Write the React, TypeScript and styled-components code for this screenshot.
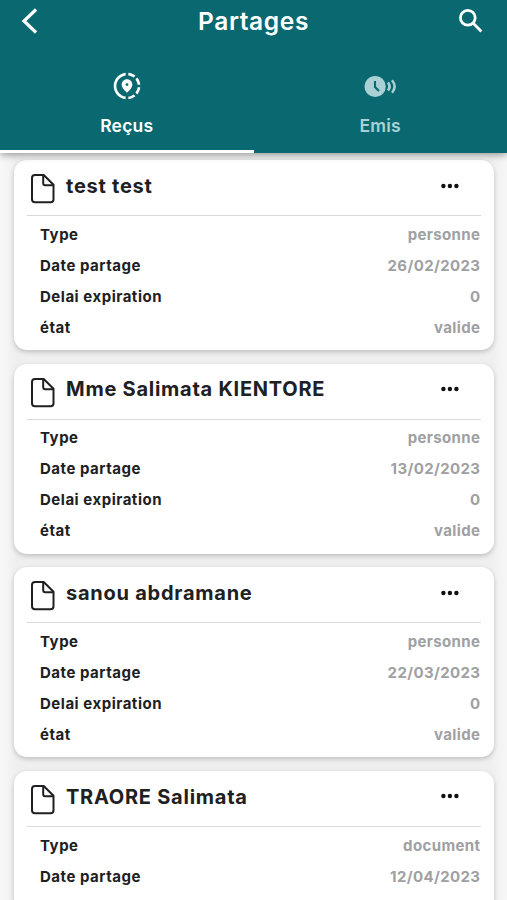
import React from "react";
import styled, { createGlobalStyle } from "styled-components";

const GlobalStyle = createGlobalStyle`
  *, *::before, *::after { box-sizing: border-box; }
  body { margin: 0; overflow: hidden; background: #f2f2f3; }
  h1, h2, dl, dt, dd { margin: 0; }
  button { border: 0; padding: 0; background: none; color: inherit; font: inherit; letter-spacing: inherit; }
`;

const Screen = styled.main`
  height: 900px;
  overflow: hidden;
  background: linear-gradient(90deg, #f8f8f8 0, #efeff0 16px, #efeff0 491px, #f7f7f8 100%);
  color: #202022;
  font-family: Inter, "Liberation Sans", sans-serif;
`;

const Header = styled.header`
  position: relative;
  height: 153px;
  background: #0a6970;
  color: #fff;
  box-shadow: 0 2px 7px rgba(0, 0, 0, 0.36);
`;

const AppBar = styled.div`
  height: 42px;
  display: grid;
  grid-template-columns: 60px 1fr 60px;
  align-items: center;
`;

const BarButton = styled.button<{ $end?: boolean }>`
  height: 42px;
  display: flex;
  align-items: center;
  justify-content: ${(p) => (p.$end ? "flex-end" : "flex-start")};
  padding: ${(p) => (p.$end ? "0 23px 0 0" : "0 0 0 18px")};
`;

const PageTitle = styled.h1`
  text-align: center;
  font-size: 24.5px;
  line-height: 42px;
  font-weight: 600;
  letter-spacing: 0.65px;
`;

const Tabs = styled.nav`
  height: 111px;
  display: grid;
  grid-template-columns: 1fr 1fr;
`;

const Tab = styled.button<{ $active?: boolean }>`
  display: flex;
  flex-direction: column;
  align-items: center;
  padding-top: 28px;
  border-bottom: 3px solid ${(p) => (p.$active ? "#fff" : "transparent")};
  color: ${(p) => (p.$active ? "#fff" : "#a9d1d5")};
  font-size: 17.5px;
  line-height: 24px;
  font-weight: 600;
  letter-spacing: 0.2px;
`;

const TabIcon = styled.span`
  height: 32px;
  margin-bottom: 12px;
  display: flex;
`;

const List = styled.section`
  display: flex;
  flex-direction: column;
  gap: 13.6px;
  padding: 7px 13px 0 14px;
`;

const Card = styled.article`
  height: 190px;
  flex: none;
  padding: 0 13px;
  border-radius: 13px;
  background: #fff;
  box-shadow: 0 2px 5px rgba(0, 0, 0, 0.2);
`;

const CardHead = styled.div`
  height: 56px;
  display: flex;
  align-items: flex-start;
  border-bottom: 1px solid #d9d9d9;
`;

const FileSlot = styled.span`
  width: 39px;
  padding: 13px 0 0 3px;
  display: flex;
`;

const CardTitle = styled.h2`
  flex: 1;
  padding-top: 11.9px;
  font-size: 20px;
  line-height: 28px;
  font-weight: 700;
  letter-spacing: 0.75px;
  white-space: nowrap;
`;

const MoreButton = styled.button`
  width: 62px;
  height: 51px;
  display: flex;
  align-items: center;
  justify-content: center;
`;

const Details = styled.dl`
  padding: 3.4px 1px 0 13px;
`;

const Row = styled.div`
  height: 31px;
  display: flex;
  align-items: center;
  justify-content: space-between;
  font-size: 15px;
  line-height: 18px;
  font-weight: 700;
  letter-spacing: 0.52px;
`;

const Value = styled.dd`
  color: #a0a0a2;
  letter-spacing: 0.38px;
  margin-right: -0.4px;
`;

const BackIcon = () => (
  <svg width="24" height="30" viewBox="0 0 24 30" fill="none" stroke="currentColor" strokeWidth="3.2">
    <path d="M18 3.5 6 15l12 11.5" />
  </svg>
);

const SearchIcon = () => (
  <svg width="26" height="26" viewBox="0 0 26 26" fill="none" stroke="currentColor" strokeWidth="2.8">
    <circle cx="9.8" cy="9.8" r="7.4" />
    <path d="m15 15 8.4 8.4" />
  </svg>
);

const ShareLocationIcon = () => (
  <svg width="32" height="32" viewBox="0 0 24 24" fill="currentColor">
    <path d="M13.02 19.93v2.02c2.01-.2 3.84-1 5.32-2.21l-1.42-1.43c-1.11.86-2.44 1.44-3.9 1.62zM4.03 12c0-4.05 3.03-7.41 6.95-7.93V2.05C5.95 2.58 2.03 6.84 2.03 12s3.92 9.42 8.95 9.95v-2.02c-3.92-.52-6.95-3.88-6.95-7.93zM19.95 11h2.02c-.2-2.01-1-3.84-2.21-5.32l-1.43 1.43c.86 1.1 1.44 2.43 1.62 3.89zM18.34 4.26c-1.48-1.21-3.32-2.01-5.32-2.21v2.02c1.46.18 2.79.76 3.9 1.62l1.42-1.43zM18.33 16.9l1.43 1.42c1.21-1.48 2.01-3.31 2.21-5.32h-2.02c-.18 1.46-.76 2.79-1.62 3.9z" />
    <path d="M16 11.1C16 8.61 14.1 7 12 7s-4 1.61-4 4.1c0 1.66 1.33 3.63 4 5.9 2.67-2.27 4-4.24 4-5.9zM12 12a1.07 1.07 0 1 1 0-2.14A1.07 1.07 0 0 1 12 12z" />
  </svg>
);

const ClockSignalIcon = () => (
  <svg width="34" height="32" viewBox="0 0 34 32" fill="none" stroke="currentColor">
    <circle cx="12.2" cy="16.5" r="10.6" fill="currentColor" stroke="none" />
    <path d="M12 11v6l4 4" stroke="#0a6970" strokeWidth="2.1" />
    <path d="M25 12.5q3 4 0 8" strokeWidth="2.7" />
    <path d="M29 10.2q5.3 6.3 0 12.6" strokeWidth="2.5" />
  </svg>
);

const FileIcon = () => (
  <svg width="26" height="32" viewBox="0 0 26 32" fill="none" stroke="currentColor" strokeWidth="2" strokeLinejoin="round">
    <path d="M5 2h8.7L23.5 11.7V26.3a3 3 0 0 1-3 3H5a3 3 0 0 1-3-3V5a3 3 0 0 1 3-3Z" />
    <path d="M13.2 2v8.2a2 2 0 0 0 2 2h8.3" />
  </svg>
);

const MoreIcon = () => (
  <svg width="20" height="6" viewBox="0 0 20 6" fill="#111">
    <circle cx="3.4" cy="3" r="2.2" />
    <circle cx="9.9" cy="3" r="2.2" />
    <circle cx="16.4" cy="3" r="2.2" />
  </svg>
);

type Share = { name: string; type: string; date: string; delay?: string; state?: string };

const shares: Share[] = [
  { name: "test test", type: "personne", date: "26/02/2023", delay: "0", state: "valide" },
  { name: "Mme Salimata KIENTORE", type: "personne", date: "13/02/2023", delay: "0", state: "valide" },
  { name: "sanou abdramane", type: "personne", date: "22/03/2023", delay: "0", state: "valide" },
  { name: "TRAORE Salimata", type: "document", date: "12/04/2023" },
];

function ShareCard({ name, type, date, delay, state }: Share) {
  const rows = [
    ["Type", type],
    ["Date partage", date],
    ["Delai expiration", delay],
    ["état", state],
  ].filter(([, value]) => value !== undefined);
  return (
    <Card>
      <CardHead>
        <FileSlot><FileIcon /></FileSlot>
        <CardTitle>{name}</CardTitle>
        <MoreButton aria-label="Options"><MoreIcon /></MoreButton>
      </CardHead>
      <Details>
        {rows.map(([label, value]) => (
          <Row key={label}>
            <dt>{label}</dt>
            <Value>{value}</Value>
          </Row>
        ))}
      </Details>
    </Card>
  );
}

export default function App() {
  return (
    <Screen>
      <GlobalStyle />
      <Header>
        <AppBar>
          <BarButton aria-label="Retour"><BackIcon /></BarButton>
          <PageTitle>Partages</PageTitle>
          <BarButton $end aria-label="Rechercher"><SearchIcon /></BarButton>
        </AppBar>
        <Tabs>
          <Tab $active><TabIcon><ShareLocationIcon /></TabIcon>Reçus</Tab>
          <Tab><TabIcon><ClockSignalIcon /></TabIcon>Emis</Tab>
        </Tabs>
      </Header>
      <List>
        {shares.map((share) => <ShareCard key={share.name} {...share} />)}
      </List>
    </Screen>
  );
}
